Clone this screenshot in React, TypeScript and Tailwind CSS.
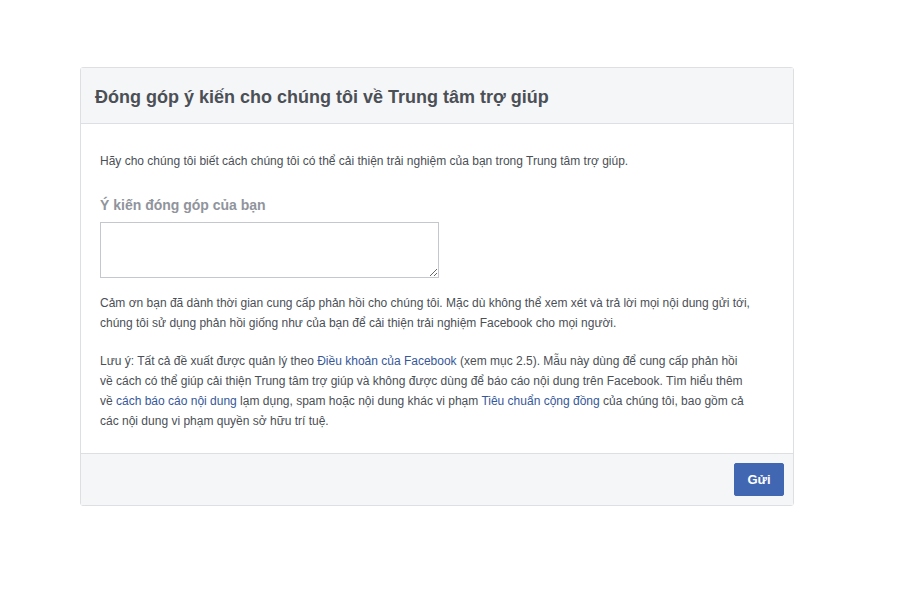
export default function App() {
  return (
    <div className="min-h-[600px] w-[900px] bg-white pt-[67px] pl-[80px] font-['Liberation_Sans',Arial,sans-serif]">
      <div className="w-[714px] rounded-[3px] border border-[#dddfe2] bg-white">
        {/* header */}
        <div className="flex h-[56px] items-center border-b border-[#dddfe2] bg-[#f5f6f7] pt-[3px] pl-[14px]">
          <h2 className="text-[18px] font-bold text-[#4b4f56]">
            Đóng góp ý kiến cho chúng tôi về Trung tâm trợ giúp
          </h2>
        </div>

        {/* body */}
        <div className="px-[19px] pt-[27px] pb-[22px] text-[12px] leading-[20px] text-[#4b4f56]">
          <p>
            Hãy cho chúng tôi biết cách chúng tôi có thể cải thiện trải nghiệm của bạn trong Trung tâm trợ giúp.
          </p>
          <label className="mt-[25px] block text-[14px] leading-[18px] font-bold text-[#90949c]">
            Ý kiến đóng góp của bạn
          </label>
          <textarea className="mt-[8px] block h-[56px] w-[339px] border border-[#c4c7cc] bg-white p-[4px] text-[12px] outline-none" />
          <p className="mt-[15px] whitespace-nowrap">
            Cảm ơn bạn đã dành thời gian cung cấp phản hồi cho chúng tôi. Mặc dù không thể xem xét và trả lời mọi nội dung gửi tới,
            <br />
            chúng tôi sử dụng phản hồi giống như của bạn để cải thiện trải nghiệm Facebook cho mọi người.
          </p>
          <p className="mt-[18px] whitespace-nowrap">
            Lưu ý: Tất cả đề xuất được quản lý theo{' '}
            <a href="#" className="text-[#365899]">Điều khoản của Facebook</a> (xem mục 2.5). Mẫu này dùng để cung cấp phản hồi
            <br />
            về cách có thể giúp cải thiện Trung tâm trợ giúp và không được dùng để báo cáo nội dung trên Facebook. Tìm hiểu thêm
            <br />
            về <a href="#" className="text-[#365899]">cách báo cáo nội dung</a> lạm dụng, spam hoặc nội dung khác vi phạm{' '}
            <a href="#" className="text-[#365899]">Tiêu chuẩn cộng đồng</a> của chúng tôi, bao gồm cả
            <br />
            các nội dung vi phạm quyền sở hữu trí tuệ.
          </p>
        </div>

        {/* footer */}
        <div className="flex h-[52px] items-center justify-end border-t border-[#dddfe2] bg-[#f5f6f7] pr-[9px]">
          <button className="h-[33px] w-[50px] rounded-[2px] border border-[#4267b2] bg-[#4267b2] text-[13px] font-bold text-white">
            Gửi
          </button>
        </div>
      </div>
    </div>
  );
}
